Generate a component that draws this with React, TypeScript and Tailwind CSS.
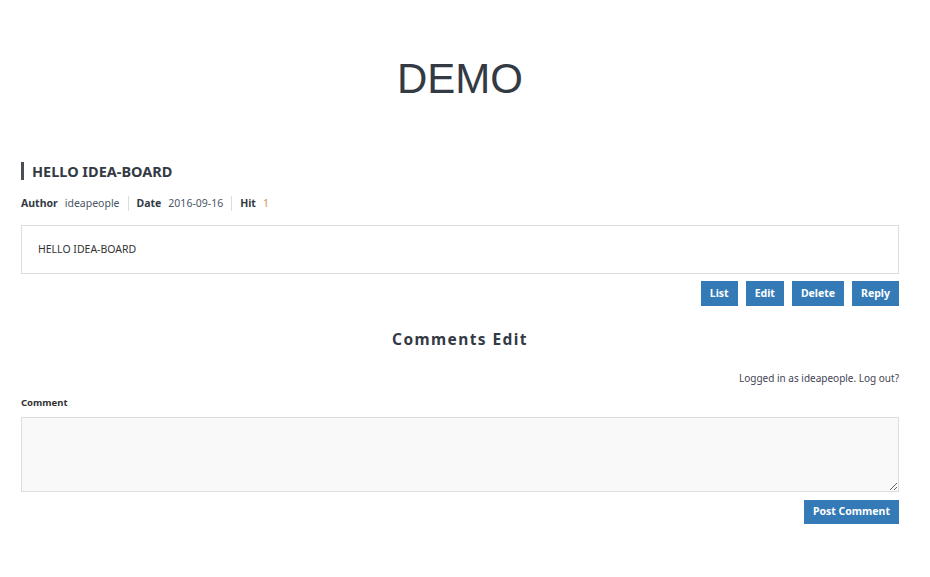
export default function App() {
  return (
    <div className="min-h-[577px] bg-white font-['Noto_Sans','Noto_Sans_CJK_KR',sans-serif] text-[#333a44]">
      <div className="ml-[21px] w-[878px] pb-[55px]">
        <h1 className="pt-[53px] text-center font-['Liberation_Sans',Arial,sans-serif] text-[42px] leading-[52px] text-[#333a44]">
          DEMO
        </h1>

        <div className="mt-[57px] flex h-[18px] items-center border-l-[3px] border-[#4a4f57] pl-[8px]">
          <h2 className="text-[14.5px] font-bold leading-none">HELLO IDEA-BOARD</h2>
        </div>

        <div className="mt-[15px] flex items-center text-[10.5px] leading-[16px]">
          <span className="font-bold">Author</span>
          <span className="ml-[7px] text-[#4a5566]">ideapeople</span>
          <span className="mx-[8px] h-[15px] w-px bg-[#ddd]" />
          <span className="font-bold">Date</span>
          <span className="ml-[7px] text-[#4a5566]">2016-09-16</span>
          <span className="mx-[8px] h-[15px] w-px bg-[#ddd]" />
          <span className="font-bold">Hit</span>
          <span className="ml-[7px] text-[#cf9450]">1</span>
        </div>

        <div className="mt-[14px] flex h-[49px] items-center border border-[#ddd] px-[16px] text-[10.5px] text-[#333]">
          HELLO IDEA-BOARD
        </div>

        <div className="mt-[7px] flex justify-end gap-[8px]">
          {["List", "Edit", "Delete", "Reply"].map((label) => (
            <button
              key={label}
              className="h-[25px] bg-[#337ab7] px-[9px] text-[10.5px] font-bold text-white"
            >
              {label}
            </button>
          ))}
        </div>

        <h3 className="mt-[22px] text-center text-[15.5px] font-bold leading-[22px] tracking-[1.4px]">
          Comments Edit
        </h3>

        <p className="mt-[21px] text-right text-[10px] leading-[14px] text-[#445]">
          Logged in as ideapeople. Log out?
        </p>

        <label className="mt-[11px] block text-[9.5px] font-bold leading-[14px] text-[#333]">
          Comment
        </label>
        <textarea className="mt-[7px] block h-[75px] w-full border border-[#ddd] bg-[#f9f9f9]" />

        <div className="mt-[8px] flex justify-end">
          <button className="h-[24px] bg-[#337ab7] px-[9px] text-[10.5px] font-bold text-white">
            Post Comment
          </button>
        </div>
      </div>
    </div>
  );
}
